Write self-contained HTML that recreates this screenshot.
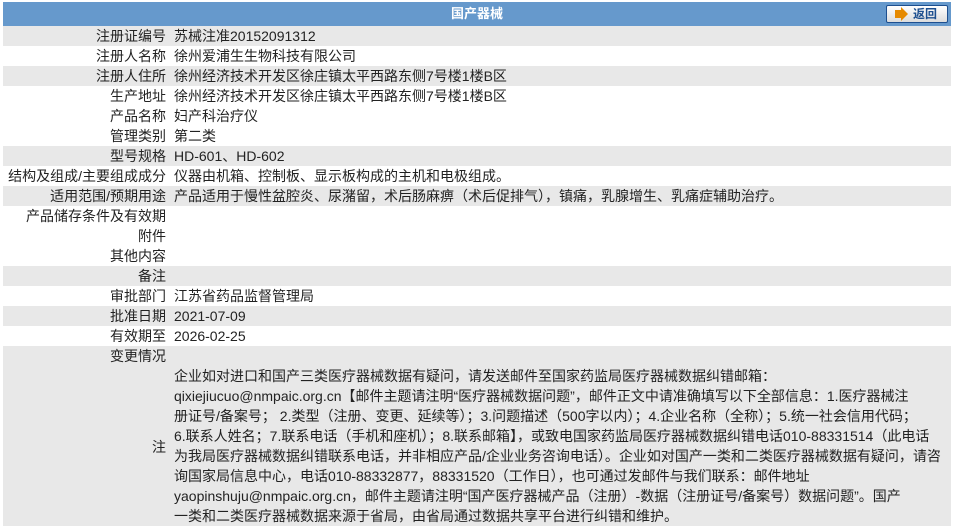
<!DOCTYPE html>
<html><head><meta charset="utf-8"><style>
*{margin:0;padding:0;box-sizing:border-box}
body{width:954px;height:531px;background:#fff;font-family:"Liberation Sans","Noto Sans CJK SC",sans-serif;font-size:14px;color:#222;position:relative;overflow:hidden}
.hd{position:absolute;left:3px;top:2px;width:948px;height:24px;background:#6699cc;color:#fff;font-weight:bold;text-align:center;line-height:24px;font-size:13px}
.btn{position:absolute;left:886px;top:5px;width:62px;height:18px;border:1px solid #1d4f8f;border-radius:2px;background:linear-gradient(#fff,#dcdcdc);font-size:12px;font-weight:bold;color:#1d4f8f;line-height:16px;padding-left:26px}
.btn i{position:absolute;left:8px;top:4px;width:6px;height:8px;background:#e68a00}
.btn b{position:absolute;left:14px;top:1px;width:0;height:0;border-top:7px solid transparent;border-bottom:7px solid transparent;border-left:7px solid #e68a00}
.r{position:absolute;left:3px;width:948px;height:20px;line-height:20px;white-space:nowrap}
.g{background:#e8e8e8}
.l{position:absolute;left:0;width:163px;text-align:right}
.v{position:absolute;left:171px}
.n{position:absolute;left:171px;top:20px;line-height:20px;white-space:nowrap}
</style></head><body>
<div class="hd">国产器械</div>
<div class="btn"><i></i><b></b>返回</div>
<div class="r g" style="top:26px"><span class="l">注册证编号</span><span class="v">苏械注准20152091312</span></div>
<div class="r" style="top:46px"><span class="l">注册人名称</span><span class="v">徐州爱浦生生物科技有限公司</span></div>
<div class="r g" style="top:66px"><span class="l">注册人住所</span><span class="v">徐州经济技术开发区徐庄镇太平西路东侧7号楼1楼B区</span></div>
<div class="r" style="top:86px"><span class="l">生产地址</span><span class="v">徐州经济技术开发区徐庄镇太平西路东侧7号楼1楼B区</span></div>
<div class="r" style="top:106px"><span class="l">产品名称</span><span class="v">妇产科治疗仪</span></div>
<div class="r" style="top:126px"><span class="l">管理类别</span><span class="v">第二类</span></div>
<div class="r g" style="top:146px"><span class="l">型号规格</span><span class="v">HD-601、HD-602</span></div>
<div class="r" style="top:166px"><span class="l">结构及组成/主要组成成分</span><span class="v">仪器由机箱、控制板、显示板构成的主机和电极组成。</span></div>
<div class="r g" style="top:186px"><span class="l">适用范围/预期用途</span><span class="v">产品适用于慢性盆腔炎、尿潴留，术后肠麻痹（术后促排气），镇痛，乳腺增生、乳痛症辅助治疗。</span></div>
<div class="r" style="top:206px"><span class="l">产品储存条件及有效期</span></div>
<div class="r" style="top:226px"><span class="l">附件</span></div>
<div class="r" style="top:246px"><span class="l">其他内容</span></div>
<div class="r g" style="top:266px"><span class="l">备注</span></div>
<div class="r" style="top:286px"><span class="l">审批部门</span><span class="v">江苏省药品监督管理局</span></div>
<div class="r g" style="top:306px"><span class="l">批准日期</span><span class="v">2021-07-09</span></div>
<div class="r" style="top:326px"><span class="l">有效期至</span><span class="v">2026-02-25</span></div>
<div class="r g" style="top:346px;height:180px"><span class="l">变更情况</span>
<span class="l" style="top:91px">注</span>
<div class="n">企业如对进口和国产三类医疗器械数据有疑问，请发送邮件至国家药监局医疗器械数据纠错邮箱：<br>qixiejiucuo@nmpaic.org.cn【邮件主题请注明“医疗器械数据问题”，邮件正文中请准确填写以下全部信息：1.医疗器械注<br>册证号/备案号； 2.类型（注册、变更、延续等）；3.问题描述（500字以内）；4.企业名称（全称）；5.统一社会信用代码；<br>6.联系人姓名；7.联系电话（手机和座机）；8.联系邮箱】，或致电国家药监局医疗器械数据纠错电话010-88331514（此电话<br>为我局医疗器械数据纠错联系电话，并非相应产品/企业业务咨询电话）。企业如对国产一类和二类医疗器械数据有疑问，请咨<br>询国家局信息中心，电话010-88332877，88331520（工作日），也可通过发邮件与我们联系：邮件地址<br>yaopinshuju@nmpaic.org.cn，邮件主题请注明“国产医疗器械产品（注册）-数据（注册证号/备案号）数据问题”。国产<br>一类和二类医疗器械数据来源于省局，由省局通过数据共享平台进行纠错和维护。</div>
</div>
</body></html>
